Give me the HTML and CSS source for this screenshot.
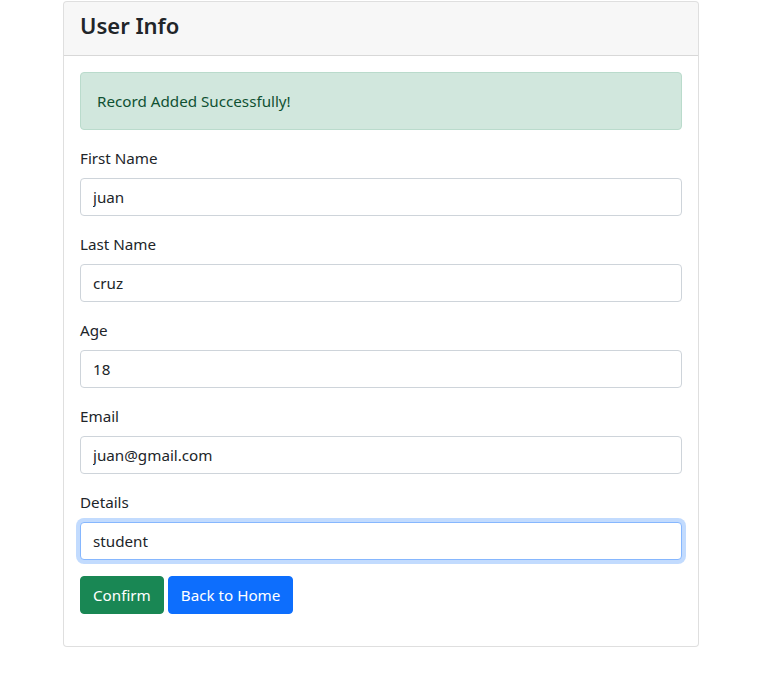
FILE: index.html
```html
<!DOCTYPE html>
<html lang="en">
<head>
<meta charset="utf-8">
<title>User Info</title>
<link rel="stylesheet" href="styles.css">
</head>
<body>
<div class="wrap">
  <div class="card">
    <div class="card-header">
      <h3 class="title">User Info</h3>
    </div>
    <div class="card-body">
      <div class="alert">Record Added Successfully!</div>
      <form class="form">
        <div class="field">
          <label class="label">First Name</label>
          <input class="input" type="text" value="juan">
        </div>
        <div class="field">
          <label class="label">Last Name</label>
          <input class="input" type="text" value="cruz">
        </div>
        <div class="field">
          <label class="label">Age</label>
          <input class="input" type="text" value="18">
        </div>
        <div class="field">
          <label class="label">Email</label>
          <input class="input" type="text" value="juan@gmail.com">
        </div>
        <div class="field">
          <label class="label">Details</label>
          <input class="input input-focus" id="details" type="text" value="student">
        </div>
        <div class="actions">
          <button type="button" class="btn btn-success">Confirm</button>
          <button type="button" class="btn btn-primary">Back to Home</button>
        </div>
      </form>
    </div>
  </div>
</div>
<script src="script.js"></script>
</body>
</html>
```
FILE: styles.css
```css
* { box-sizing: border-box; }
html, body { margin: 0; padding: 0; background: #fff; }
body {
  font-family: "Noto Sans", "Open Sans", sans-serif;
  font-size: 15.2px;
  line-height: 24px;
  color: #212529;
}
.wrap { padding: 1px 0 0 63px; }
.card {
  width: 636px;
  border: 1px solid rgba(0,0,0,.125);
  border-radius: 4px;
  background: #fff;
}
.card-header {
  padding: 9px 16px 8px;
  background: rgba(0,0,0,.03);
  border-bottom: 1px solid rgba(0,0,0,.125);
  border-radius: 3px 3px 0 0;
}
.title {
  margin: 0 0 7px;
  font-size: 22px;
  font-weight: 600;
  line-height: 29px;
}
.card-body { padding: 16px; }
.alert {
  padding: 16px;
  margin-bottom: 16px;
  border: 1px solid #badbcc;
  border-radius: 4px;
  background: #d1e7dd;
  color: #0f5132;
}
.field { margin-bottom: 16px; }
.label { display: block; margin-bottom: 8px; }
.input {
  display: block;
  width: 100%;
  height: 38px;
  padding: 6px 12px;
  font: inherit;
  line-height: 24px;
  color: #212529;
  background: #fff;
  border: 1px solid #ced4da;
  border-radius: 4px;
  outline: none;
}
.input-focus {
  border-color: #86b7fe;
  box-shadow: 0 0 0 4px rgba(13,110,253,.25);
}
.actions { display: flex; gap: 4px; margin-bottom: 16px; }
.btn {
  font: inherit;
  line-height: 24px;
  height: 38px;
  padding: 6px 12px;
  border: 1px solid transparent;
  border-radius: 4px;
  color: #fff;
  cursor: pointer;
}
.btn-success { background: #198754; border-color: #198754; }
.btn-primary { background: #0d6efd; border-color: #0d6efd; }
```
FILE: script.js
```js
var el = document.getElementById('details');
el.focus();
el.setSelectionRange(el.value.length, el.value.length);
```
